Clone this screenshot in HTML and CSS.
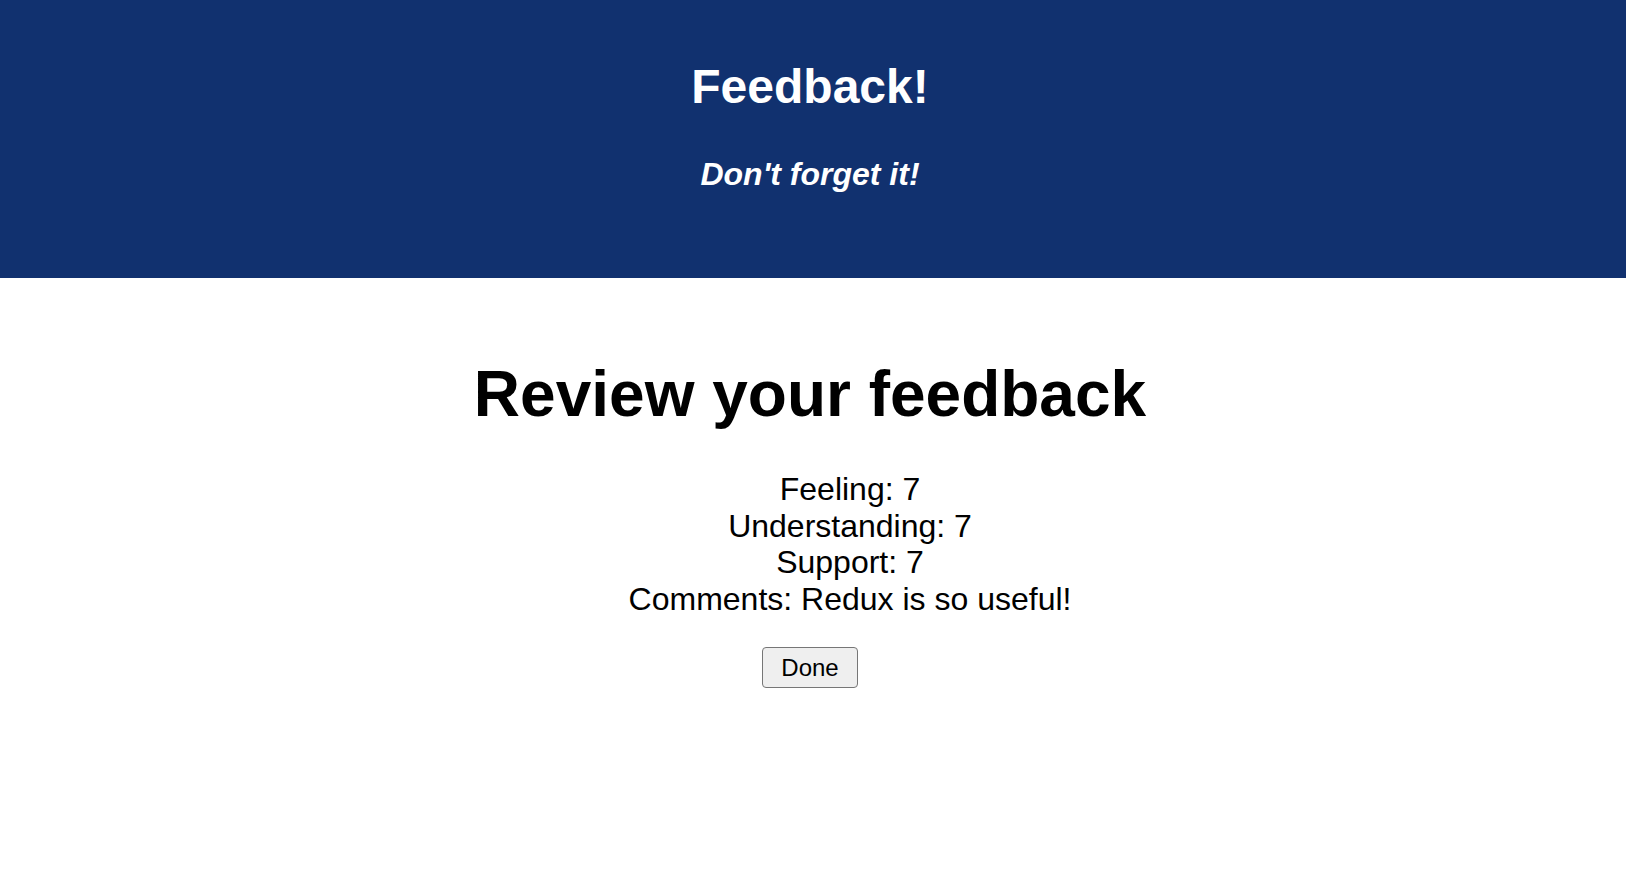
FILE: index.html
```html
<!DOCTYPE html>
<html lang="en">
<head>
<meta charset="utf-8">
<title>Feedback!</title>
<link rel="stylesheet" href="styles.css">
</head>
<body>
<header class="app-header">
  <h1 class="app-title">Feedback!</h1>
  <h4 class="app-subtitle"><i>Don't forget it!</i></h4>
</header>
<main class="review">
  <h1 class="review-title">Review your feedback</h1>
  <ul class="review-list">
    <li>Feeling: 7</li>
    <li>Understanding: 7</li>
    <li>Support: 7</li>
    <li>Comments: Redux is so useful!</li>
  </ul>
  <button class="done-btn" type="button">Done</button>
</main>
</body>
</html>
```
FILE: styles.css
```css
html, body {
  margin: 0;
  padding: 0;
  background: #ffffff;
}
body {
  font-family: "Liberation Sans", Arial, Helvetica, sans-serif;
  color: #000000;
  text-align: center;
}
.app-header {
  background: #11316f;
  color: #ffffff;
  height: 278px;
  box-sizing: border-box;
  padding: 59px 6px 0 0;
}
.app-title {
  margin: 0;
  font-size: 48px;
  font-weight: bold;
  line-height: 55px;
}
.app-subtitle {
  margin: 42px 0 0;
  font-size: 32px;
  font-weight: bold;
  line-height: 37px;
}
.review {
  padding: 79px 6px 0 0;
  display: flex;
  flex-direction: column;
  align-items: center;
}
.review-title {
  margin: 0;
  font-size: 64px;
  font-weight: bold;
  line-height: 74px;
}
.review-list {
  list-style: none;
  margin: 40px 0 0;
  padding: 0 0 0 80px;
  font-size: 32px;
  line-height: 36.5px;
}
.done-btn {
  margin-top: 30px;
  font-family: "Liberation Sans", Arial, Helvetica, sans-serif;
  font-size: 24px;
  line-height: 28px;
  padding: 6px 18px 5px;
  color: #000000;
  background: #efefef;
  border: 1px solid #767676;
  border-radius: 4px;
}
```
